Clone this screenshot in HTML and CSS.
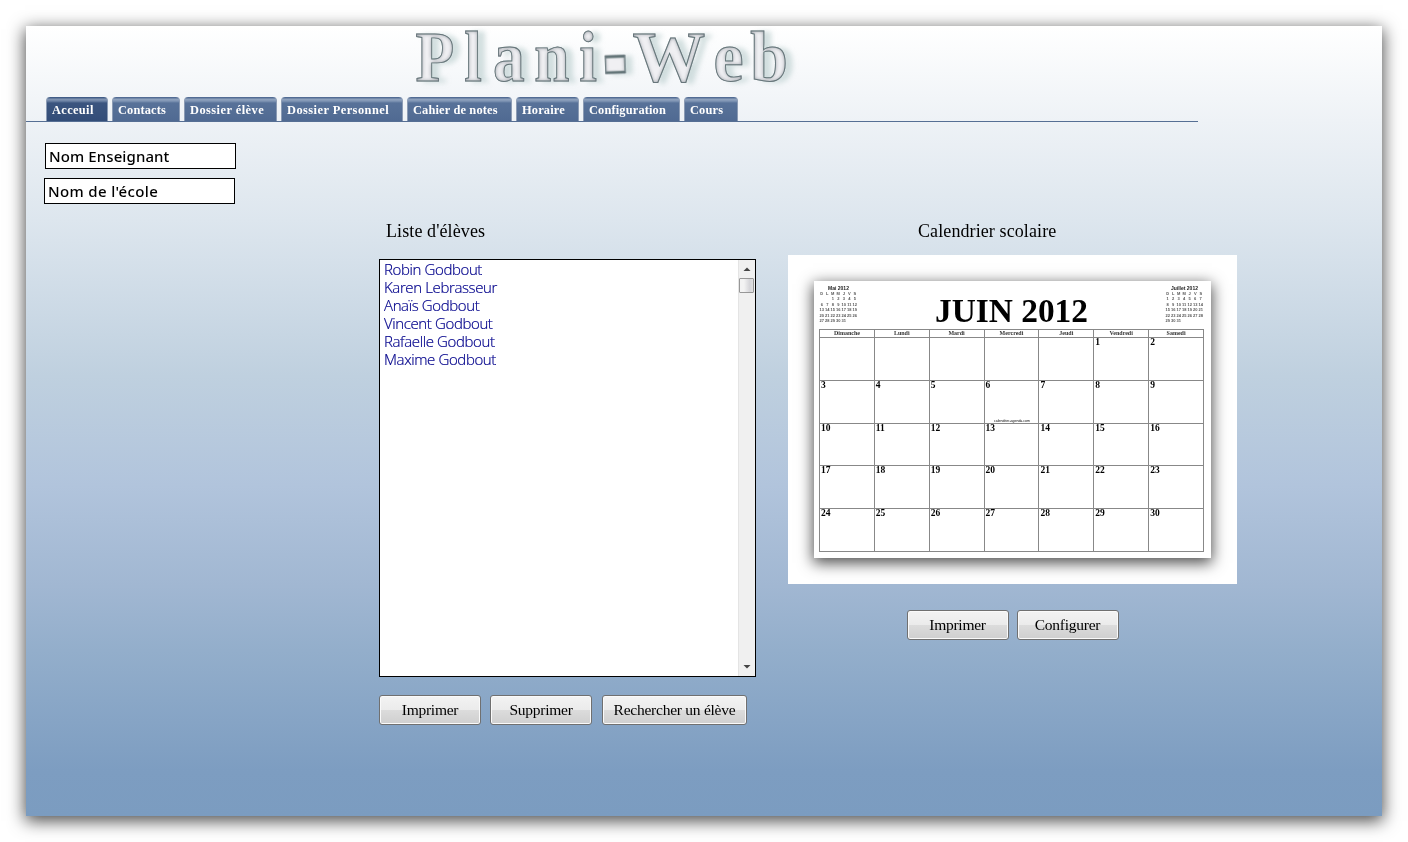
FILE: index.html
```html
<!DOCTYPE html>
<html lang="fr">
<head>
<meta charset="utf-8">
<title>Plani-Web</title>
<link rel="stylesheet" href="styles.css">
</head>
<body>
<main class="sheet">
  <header class="brand">
    <svg class="logo" width="420" height="71" viewBox="400 26 420 71" role="img" aria-label="Plani-Web">
      <defs>
        <filter id="bevel" x="400" y="20" width="420" height="80" filterUnits="userSpaceOnUse" color-interpolation-filters="sRGB">
          <feGaussianBlur in="SourceAlpha" stdDeviation="2.5" result="b"/>
          <feOffset in="b" dx="7" dy="1" result="o"/>
          <feFlood flood-color="#b7cbcb" flood-opacity=".6"/>
          <feComposite in2="o" operator="in" result="shadow"/>
          <feFlood flood-color="#727982"/>
          <feComposite in2="SourceAlpha" operator="out"/>
          <feGaussianBlur stdDeviation="2"/>
          <feComposite in2="SourceAlpha" operator="in" result="inner"/>
          <feMerge><feMergeNode in="shadow"/><feMergeNode in="SourceGraphic"/><feMergeNode in="inner"/></feMerge>
        </filter>
      </defs>
      <g filter="url(#bevel)" class="logo-letters">
        <text transform="translate(415.5 80.5) scale(.88 1)" x="0 55.5 88 135 186">Plani</text>
        <text transform="translate(604.5 109) rotate(-2) scale(1.03 2.6)">-</text>
        <text transform="translate(632.5 80.5) scale(1.01 1)" x="0">W</text>
        <text transform="translate(713.5 80.5) scale(.94 1)" x="0 39">eb</text>
      </g>
    </svg>
  </header>
  <nav class="tabs">
    <a class="tab active w62">Acceuil</a><a class="tab w68">Contacts</a><a class="tab loose w93">Dossier élève</a><a class="tab loose w122">Dossier Personnel</a><a class="tab w105">Cahier de notes</a><a class="tab w63">Horaire</a><a class="tab w97">Configuration</a><a class="tab w54">Cours</a>
  </nav>
  <div class="fields">
    <div class="field teacher">Nom Enseignant</div>
    <div class="field school">Nom de l'école</div>
  </div>
  <div class="columns">
    <section class="students">
      <h2 class="title">Liste d'élèves</h2>
      <div class="listbox">
        <ul class="names">
          <li>Robin Godbout</li><li>Karen Lebrasseur</li><li>Anaïs Godbout</li><li>Vincent Godbout</li><li>Rafaelle Godbout</li><li>Maxime Godbout</li>
        </ul>
        <div class="scrollbar">
          <svg class="arrow" width="8" height="4" viewBox="0 0 8 4"><path d="M.5 4 4 .5 7.5 4z" fill="#444"/></svg>
          <div class="thumb"></div>
          <svg class="arrow down" width="8" height="4" viewBox="0 0 8 4"><path d="M.5 0h7L4 3.5z" fill="#444"/></svg>
        </div>
      </div>
      <div class="buttons">
        <button class="btn">Imprimer</button><button class="btn">Supprimer</button><button class="btn wide">Rechercher un élève</button>
      </div>
    </section>
    <section class="calendar">
      <h2 class="title">Calendrier scolaire</h2>
      <div class="frame">
        <div class="paper">
          <div class="cal-head">
            <div class="mini">
              <div class="mini-title">Mai 2012</div>
              <div class="mini-grid"><i>D</i><i>L</i><i>M</i><i>M</i><i>J</i><i>V</i><i>S</i><i></i><i></i><i>1</i><i>2</i><i>3</i><i>4</i><i>5</i><i>6</i><i>7</i><i>8</i><i>9</i><i>10</i><i>11</i><i>12</i><i>13</i><i>14</i><i>15</i><i>16</i><i>17</i><i>18</i><i>19</i><i>20</i><i>21</i><i>22</i><i>23</i><i>24</i><i>25</i><i>26</i><i>27</i><i>28</i><i>29</i><i>30</i><i>31</i></div>
            </div>
            <div class="month">JUIN 2012</div>
            <div class="mini">
              <div class="mini-title">Juillet 2012</div>
              <div class="mini-grid"><i>D</i><i>L</i><i>M</i><i>M</i><i>J</i><i>V</i><i>S</i><i>1</i><i>2</i><i>3</i><i>4</i><i>5</i><i>6</i><i>7</i><i>8</i><i>9</i><i>10</i><i>11</i><i>12</i><i>13</i><i>14</i><i>15</i><i>16</i><i>17</i><i>18</i><i>19</i><i>20</i><i>21</i><i>22</i><i>23</i><i>24</i><i>25</i><i>26</i><i>27</i><i>28</i><i>29</i><i>30</i><i>31</i></div>
            </div>
          </div>
          <div class="grid">
            <b class="day">Dimanche</b><b class="day">Lundi</b><b class="day">Mardi</b><b class="day">Mercredi</b><b class="day">Jeudi</b><b class="day">Vendredi</b><b class="day">Samedi</b>
            <b></b><b></b><b></b><b></b><b></b><b>1</b><b>2</b>
            <b>3</b><b>4</b><b>5</b><b class="credit-cell">6<span class="credit">calendrier-agenda.com</span></b><b>7</b><b>8</b><b>9</b>
            <b>10</b><b>11</b><b>12</b><b>13</b><b>14</b><b>15</b><b>16</b>
            <b>17</b><b>18</b><b>19</b><b>20</b><b>21</b><b>22</b><b>23</b>
            <b>24</b><b>25</b><b>26</b><b>27</b><b>28</b><b>29</b><b>30</b>
          </div>
        </div>
      </div>
      <div class="buttons centered">
        <button class="btn">Imprimer</button><button class="btn">Configurer</button>
      </div>
    </section>
  </div>
</main>
</body>
</html>
```
FILE: styles.css
```css
* { box-sizing: border-box; }
body {
  margin: 0;
  padding: 26px;
  height: 842px;
  background: #fff;
  font-family: "Liberation Serif", "Times New Roman", serif;
  color: #000;
}
.sheet {
  width: 1356px;
  height: 790px;
  background: linear-gradient(#fff 0, #eef2f6 95px, #dde6ee 194px, #bfd0df 350px, #b1c4dc 460px, #a1b7d2 560px, #93aecb 625px, #7d9dc1 745px, #7b9cc0 790px);
  box-shadow: 0 4px 16px 1px rgba(0,0,0,.7);
}
.brand { height: 71px; padding-left: 374px; }
.logo { display: block; overflow: visible; }
.logo-letters {
  font-size: 72px;
  font-weight: bold;
  fill: #f0f0f3;
  stroke: #5d7374;
  stroke-width: 1px;
}
.tabs {
  display: flex;
  gap: 4px;
  width: 1172px;
  height: 25px;
  padding-left: 20px;
  border-bottom: 1px solid #566f94;
}
.tab {
  height: 24px;
  padding-left: 5px;
  border: solid #8b9bb4;
  border-width: 0 1px;
  border-radius: 4px 4px 0 0;
  background: linear-gradient(#526c94 0 1px, #91a4bf 2px, #8196b5 4px, #587299 6px, #506a92 100%);
  color: #fff;
  font-size: 12.4px;
  font-weight: bold;
  line-height: 26px;
  letter-spacing: .15px;
  white-space: nowrap;
}
.loose { letter-spacing: .45px; }
.active { letter-spacing: .35px; background: linear-gradient(#425d87 0 1px, #8497b4 2px, #6d83a5 4px, #3b557f 6px, #334d78 100%); }
.w62 { width: 62px; } .w68 { width: 68px; } .w93 { width: 93px; } .w122 { width: 122px; }
.w105 { width: 105px; } .w63 { width: 63px; } .w97 { width: 97px; } .w54 { width: 54px; }
.fields { padding: 21px 0 0 18px; height: 82px; }
.field {
  width: 191px;
  height: 26px;
  padding-left: 3px;
  border: 1px solid #000;
  background: #fff;
  font: 500 15px/24px "Noto Sans", sans-serif;
  letter-spacing: .1px;
}
.teacher { margin-left: 1px; }
.school { margin-top: 9px; letter-spacing: .35px; }
.columns { display: flex; gap: 32px; padding: 16px 0 0 353px; }
.title { margin: 0; height: 39px; font-size: 18px; line-height: 22px; font-weight: normal; letter-spacing: .1px; }
.students { width: 377px; }
.students .title { padding-left: 7px; }
.listbox {
  display: flex;
  justify-content: space-between;
  height: 418px;
  border: 1px solid #000;
  background: #fff;
}
.names {
  margin: 0;
  padding: 0 0 0 4px;
  list-style: none;
  font: 300 15px/18px "Open Sans", sans-serif;
  letter-spacing: -.38px;
  color: #00008b;
  -webkit-text-stroke: .2px #00008b;
  white-space: nowrap;
}
.scrollbar {
  display: flex;
  flex-direction: column;
  align-items: center;
  width: 17px;
  padding: 7px 1px 7px 0;
  border-left: 1px solid #e4e4e4;
  background: #f0f0f0;
}
.thumb {
  width: 15px;
  height: 15px;
  margin-top: 7px;
  border: 1px solid #979797;
  border-radius: 1px;
  background: linear-gradient(90deg, #f3f3f3 30%, #d5d5d9 75%, #e0e0e0);
}
.down { margin-top: auto; }
.buttons { display: flex; gap: 9px; margin-top: 18px; }
.btn {
  width: 102px;
  height: 30px;
  padding: 0;
  border: 1px solid #707070;
  border-radius: 3px;
  background: linear-gradient(#f3f3f3, #ebebeb 50%, #dcdcdc 50%, #cfcfcf);
  box-shadow: inset 0 0 0 1px #fafafa;
  font: 15.5px/28px "Liberation Serif", serif;
  letter-spacing: -.25px;
  color: #000;
}
.wide { width: 145px; margin-left: 1px; }
.calendar { width: 449px; }
.calendar .title { height: 35px; padding-left: 130px; }
.frame { height: 329px; padding: 26px 0 0 26px; background: #fff; overflow: hidden; }
.paper {
  width: 397px;
  height: 277px;
  padding: 0 7px 0 5px;
  background: #fff;
  box-shadow: 0 4px 14px 1px rgba(0,0,0,.7);
}
.cal-head { display: flex; justify-content: space-between; height: 48px; }
.mini { width: 39px; padding-top: 4px; font: bold 4px/6px "Liberation Sans", sans-serif; color: #555; }
.mini-title { font-size: 5px; text-align: center; white-space: nowrap; color: #222; }
.mini-grid { display: grid; grid-template-columns: repeat(7, 5.5px); grid-auto-rows: 5.4px; }
.mini-grid i { font-style: normal; text-align: center; }
.month { padding-top: 10px; font-size: 33.4px; line-height: 40px; font-weight: bold; white-space: nowrap; }
.grid {
  display: grid;
  grid-template-columns: repeat(7, 1fr);
  grid-template-rows: 8px repeat(5, 42.8px);
  width: 385px;
  border: solid #888;
  border-width: 1px 0 0 1px;
}
.grid b { padding-left: 1px; border: solid #888; border-width: 0 1px 1px 0; font-size: 9.5px; line-height: 9px; }
.grid .day { padding: 0; font-size: 6px; line-height: 7px; text-align: center; color: #333; }
.credit-cell { display: flex; flex-direction: column; justify-content: space-between; }
.grid .credit { font: 3.5px/4px "Liberation Sans", sans-serif; text-align: center; }
.centered { justify-content: center; margin-top: 26px; gap: 8px; }
```
